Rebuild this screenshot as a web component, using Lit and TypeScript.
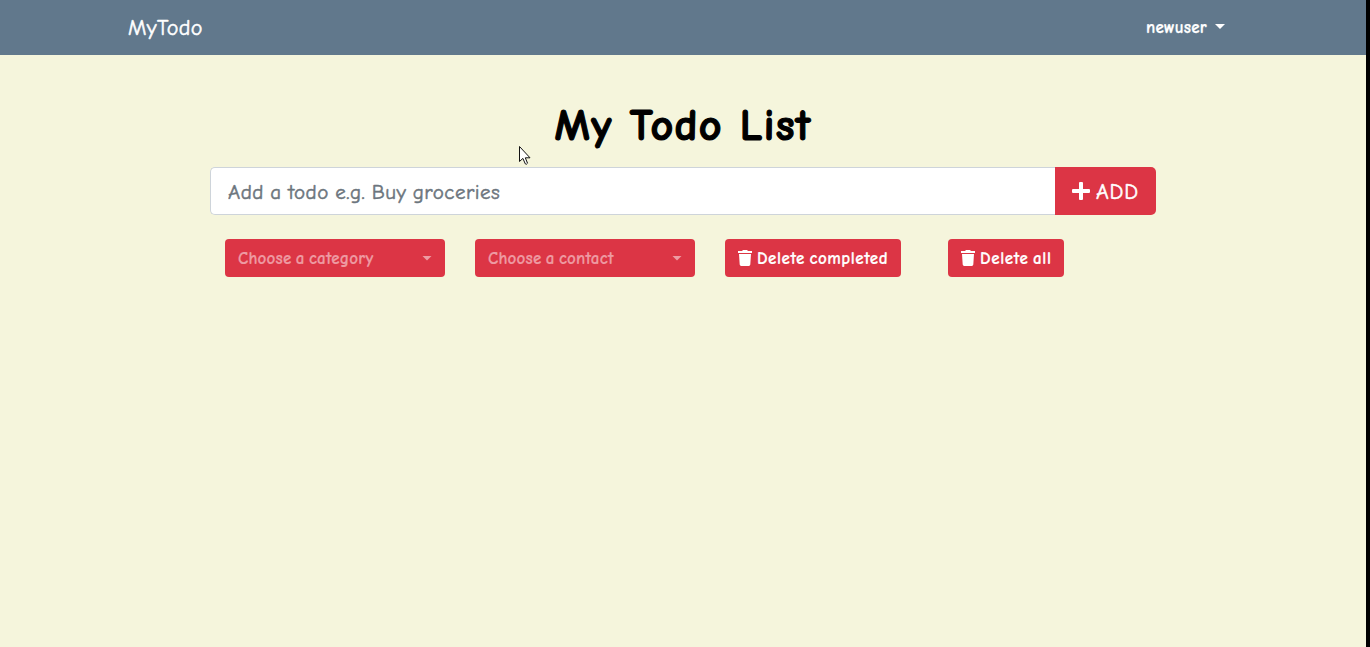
import { LitElement, html, css, svg } from "lit";
import { customElement } from "lit/decorators.js";

const trash = svg`<path d="M5 0h4l1 1h4v2H0V1h4zM1 4h12l-.7 10.6A1.5 1.5 0 0 1 10.8 16H3.2a1.5 1.5 0 0 1-1.5-1.4z"/>`;

@customElement("app-root")
export class AppRoot extends LitElement {
  static styles = css`
    :host {
      display: block;
      box-sizing: border-box;
      height: 100vh;
      overflow: hidden;
      border-right: 4px solid #000;
      background: #f5f5dc;
      font-family: "Comic Sans MS", "Comic Neue", "Open Sans", sans-serif;
      font-size: 16px;
      color: #000;
    }
    * { box-sizing: border-box; }
    svg { display: block; flex: none; fill: currentColor; }
    nav {
      display: flex;
      align-items: center;
      justify-content: space-between;
      height: 55px;
      padding: 0 141px 0 128px;
      background: #61788c;
      color: #fff;
    }
    .brand { font-size: 22px; line-height: 30px; letter-spacing: 0.35px; -webkit-text-stroke: 0.5px; }
    .user { display: flex; align-items: center; font-weight: 700; font-size: 17px; line-height: 24px; letter-spacing: 0.2px; -webkit-text-stroke: 0.25px; }
    .user .name { width: 69px; }
    .user .caret { margin-bottom: 2px; }
    .caret { width: 10px; height: 5px; background: currentColor; clip-path: polygon(0 0, 100% 0, 50% 100%); }
    main { width: 946px; margin: 0 auto; padding-top: 41px; }
    h1 {
      margin: 0;
      height: 71px;
      line-height: 60px;
      font-size: 44px;
      font-weight: 700;
      letter-spacing: 1.3px;
      text-align: center;
      white-space: nowrap;
      -webkit-text-stroke: 1.2px;
    }
    .entry { display: flex; height: 48px; }
    input {
      flex: 1;
      min-width: 0;
      border: 1px solid #ced4da;
      border-right: 0;
      border-radius: 5px 0 0 5px;
      padding: 1px 16px 0 17px;
      background: #fff;
      font: inherit;
      font-size: 21px;
      letter-spacing: 0.47px;
      word-spacing: -1px;
      outline: none;
    }
    input::placeholder { color: #6c757d; opacity: 1; -webkit-text-stroke: 0.5px; }
    button {
      display: flex;
      align-items: center;
      height: 38px;
      margin: 0;
      padding: 0 13px;
      border: 0;
      border-radius: 4px;
      background: #dc3545;
      color: #fff;
      font: inherit;
      font-size: 17px;
      font-weight: 700;
      white-space: nowrap;
      -webkit-text-stroke: 0.2px;
    }
    .add { width: 101px; height: 48px; padding: 0 17px; border-radius: 0 5px 5px 0; font-size: 22px; font-weight: 400; gap: 6px; letter-spacing: 0.8px; -webkit-text-stroke: 0.5px; }
    .add span { padding-top: 2px; }
    .actions { display: flex; padding: 24px 15px 0; }
    .select { width: 220px; margin-right: 30px; justify-content: space-between; color: #ee9aa2; letter-spacing: 0.2px; word-spacing: -2px; }
    .completed { width: 176px; margin-right: 47px; gap: 5px; letter-spacing: 0.52px; word-spacing: -2px; }
    .all { width: 116px; gap: 5px; letter-spacing: 0.6px; word-spacing: -2px; }
    .cursor { position: absolute; left: 518px; top: 146px; }
  `;

  render() {
    return html`
      <nav>
        <span class="brand">MyTodo</span>
        <span class="user"><span class="name"><span>newuser</span></span><span class="caret"></span></span>
      </nav>
      <main>
        <h1><span>My Todo List</span></h1>
        <div class="entry">
          <input placeholder="Add a todo e.g. Buy groceries" />
          <button class="add">
            <svg width="18" height="18" viewBox="0 0 18 18"><path d="M8 0h2q1 0 1 1v6h6q1 0 1 1v2q0 1-1 1h-6v6q0 1-1 1H8q-1 0-1-1v-6H1q-1 0-1-1V8q0-1 1-1h6V1q0-1 1-1z"/></svg>
            <span>ADD</span>
          </button>
        </div>
        <div class="actions">
          <button class="select"><span>Choose a category</span><span class="caret"></span></button>
          <button class="select"><span>Choose a contact</span><span class="caret"></span></button>
          <button class="completed"><svg width="14" height="16" viewBox="0 0 14 16">${trash}</svg><span>Delete completed</span></button>
          <button class="all"><svg width="14" height="16" viewBox="0 0 14 16">${trash}</svg><span>Delete all</span></button>
        </div>
      </main>
      <svg class="cursor" width="13" height="20" viewBox="0 0 13 20"><path d="M1.5.5v15l3.4-3.1 2.4 5.5q1.2 1 2.2-.7l-2.2-5.4H12z" fill="#fff" stroke="#111" stroke-width="1"/></svg>
    `;
  }
}
